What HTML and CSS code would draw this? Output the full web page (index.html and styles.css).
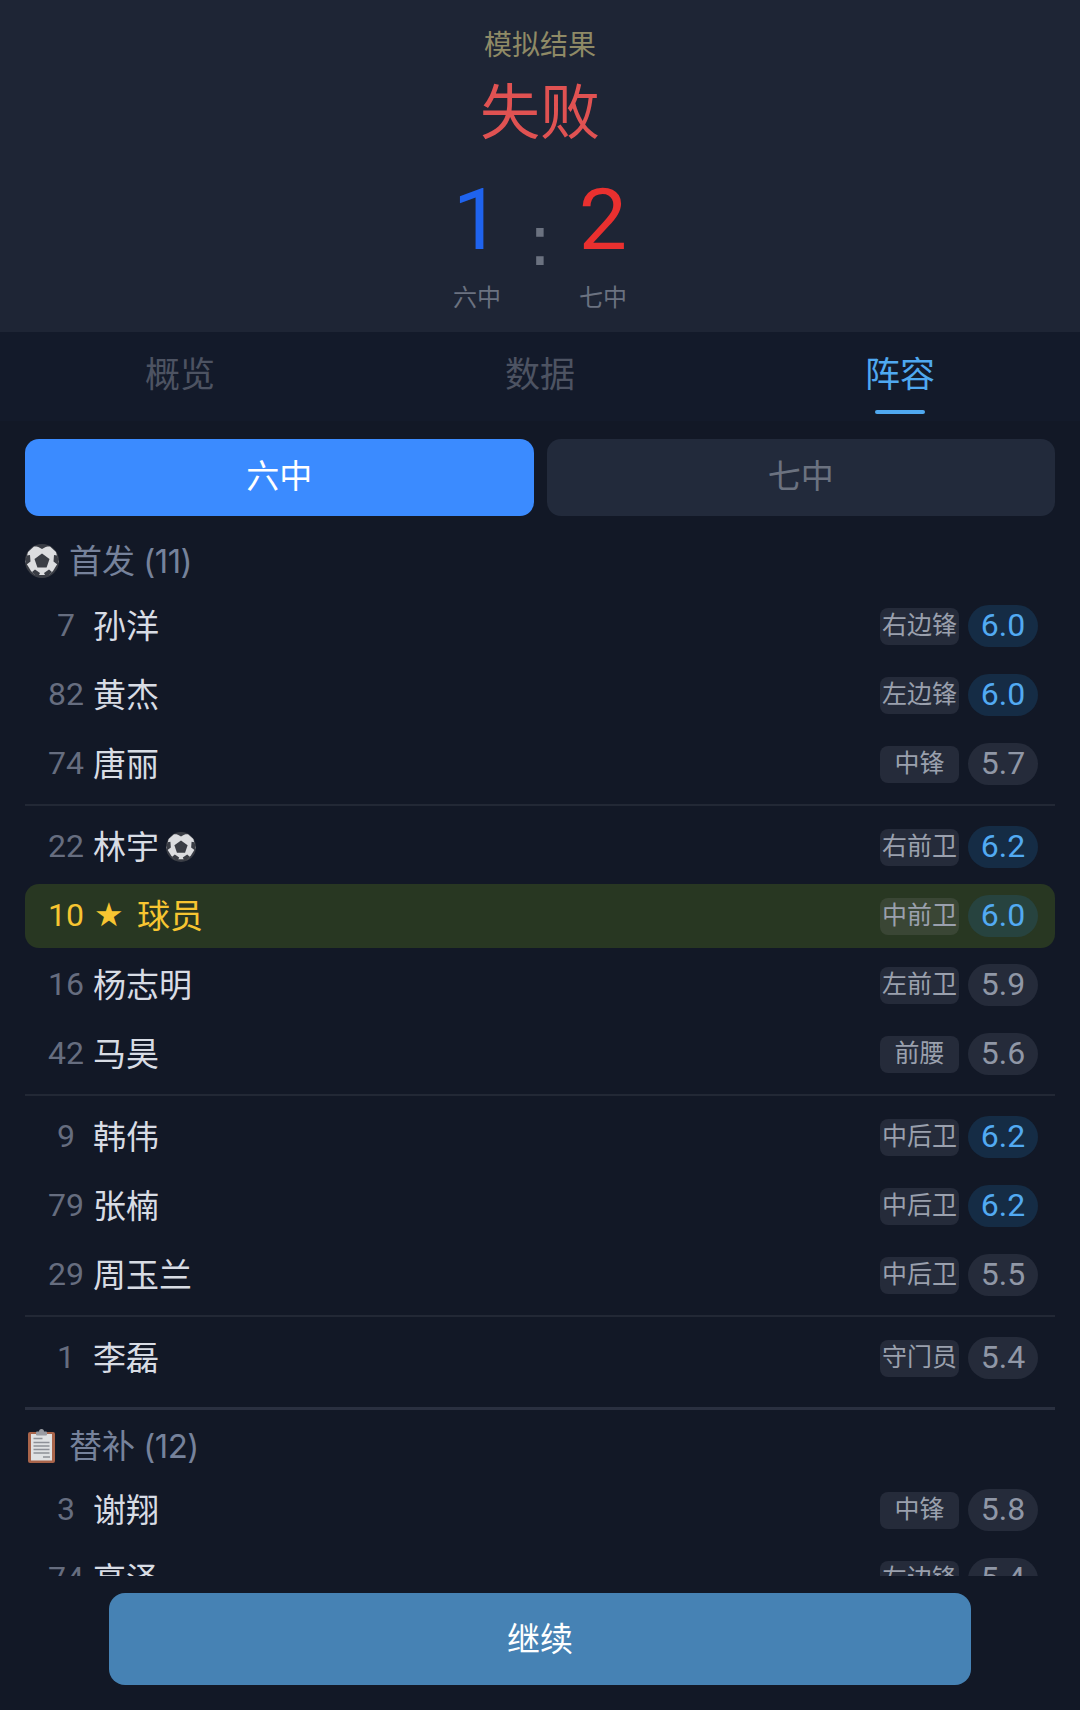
FILE: index.html
```html
<!DOCTYPE html>
<html lang="zh-CN">

<head>
    <meta charset="UTF-8">
    <meta name="viewport" content="width=device-width, initial-scale=1.0">
    <title>模拟结果</title>
    <link rel="stylesheet" href="styles.css">
</head>

<body>
    <svg class="defs" width="0" height="0" aria-hidden="true">
        <symbol id="ball" viewBox="0 0 34 34">
            <circle cx="17" cy="17" r="17" fill="#3a3d45"/>
            <path d="M9 2.500 L25 2.500 L31 8 L33.500 18 L28 27 L24 31 L10 31 L6 27 L.5 18 L3 8 Z" fill="#dcdde0"/>
            <path d="M11 1.800 Q17 -.8 23 1.800 L17 5 Z M1.800 11.500 Q0 16 1 21 L5.500 17.500 L5 11 Z M32.200 11.500 Q34 16 33 21 L28.500 17.500 L29 11 Z M7 28 Q10 32 13 33 L15 29 L10 25.500 Z M27 28 Q24 32 21 33 L19 29 L24 25.500 Z" fill="#3a3d45"/>
            <path d="M17 9.500 L24.500 15 L21.600 23.500 L12.400 23.500 L9.500 15 Z" fill="#3a3d45"/>
        </symbol>
        <symbol id="board" viewBox="0 0 30 34">
            <rect x="1" y="3" width="27" height="31" rx="2" fill="#a9644a"/>
            <rect x="4" y="5" width="21" height="26.500" fill="#dfe1e3"/>
            <rect x="9" y="2.500" width="11" height="4" rx="1" fill="#9a9ca3"/>
            <circle cx="14.500" cy="2.500" r="2.500" fill="#9a9ca3"/>
            <path d="M6.500 9.500h9M6.500 13.500h16M6.500 17h16M6.500 20.500h16M6.500 24h16M16 28h7" stroke="#8d9097" stroke-width="1.500"/>
        </symbol>
    </svg>

    <div class="page">
        <header class="hero">
            <p class="hero-label">模拟结果</p>
            <h1 class="hero-result">失败</h1>
            <div class="score">
                <div class="score-side">
                    <span class="score-num home">1</span>
                    <span class="score-team">六中</span>
                </div>
                <span class="score-sep">:</span>
                <div class="score-side">
                    <span class="score-num away">2</span>
                    <span class="score-team">七中</span>
                </div>
            </div>
        </header>

        <nav class="tabs">
            <div class="tab">概览</div>
            <div class="tab">数据</div>
            <div class="tab active">阵容</div>
        </nav>

        <main class="content">
            <div class="team-switch">
                <button class="team-btn active">六中</button>
                <button class="team-btn">七中</button>
            </div>

            <h2 class="section-title"><svg class="section-icon"><use href="#ball"/></svg><span>首发 <span class="count">(11)</span></span></h2>

            <div class="group">
                <div class="row"><span class="num">7</span><span class="name">孙洋</span><span class="pos">右边锋</span><span class="rate high">6.0</span></div>
                <div class="row"><span class="num">82</span><span class="name">黄杰</span><span class="pos">左边锋</span><span class="rate high">6.0</span></div>
                <div class="row"><span class="num">74</span><span class="name">唐丽</span><span class="pos">中锋</span><span class="rate">5.7</span></div>
            </div>
            <div class="group">
                <div class="row"><span class="num">22</span><span class="name">林宇<svg class="goal"><use href="#ball"/></svg></span><span class="pos">右前卫</span><span class="rate high">6.2</span></div>
                <div class="row me"><span class="num">10</span><span class="star">★</span><span class="name">球员</span><span class="pos">中前卫</span><span class="rate high">6.0</span></div>
                <div class="row"><span class="num">16</span><span class="name">杨志明</span><span class="pos">左前卫</span><span class="rate">5.9</span></div>
                <div class="row"><span class="num">42</span><span class="name">马昊</span><span class="pos">前腰</span><span class="rate">5.6</span></div>
            </div>
            <div class="group">
                <div class="row"><span class="num">9</span><span class="name">韩伟</span><span class="pos">中后卫</span><span class="rate high">6.2</span></div>
                <div class="row"><span class="num">79</span><span class="name">张楠</span><span class="pos">中后卫</span><span class="rate high">6.2</span></div>
                <div class="row"><span class="num">29</span><span class="name">周玉兰</span><span class="pos">中后卫</span><span class="rate">5.5</span></div>
            </div>
            <div class="group last">
                <div class="row"><span class="num">1</span><span class="name">李磊</span><span class="pos">守门员</span><span class="rate">5.4</span></div>
            </div>

            <h2 class="section-title"><svg class="section-icon"><use href="#board"/></svg><span>替补 <span class="count">(12)</span></span></h2>

            <div class="row"><span class="num">3</span><span class="name">谢翔</span><span class="pos">中锋</span><span class="rate">5.8</span></div>
            <div class="row"><span class="num">74</span><span class="name">高泽</span><span class="pos">左边锋</span><span class="rate">5.4</span></div>
        </main>

        <footer class="footer">
            <button class="continue-btn">继续</button>
        </footer>
    </div>
</body>

</html>
```

FILE: styles.css
```css
* {
    box-sizing: border-box;
}

body {
    margin: 0;
    background: #121826;
    font-family: "Roboto", "Noto Sans CJK SC", sans-serif;
}

.defs {
    position: absolute;
}

.page {
    height: 1710px;
    display: flex;
    flex-direction: column;
    overflow: hidden;
}

/* Result header */
.hero {
    height: 332px;
    background: #1e2535;
    text-align: center;
    padding-top: 26px;
    flex-shrink: 0;
}

.hero-label {
    margin: 0;
    height: 40px;
    line-height: 40px;
    font-size: 28px;
    color: #8f8a66;
}

.hero-result {
    margin: 10px 0 0;
    height: 76px;
    line-height: 76px;
    font-size: 60px;
    font-weight: 400;
    color: #e05252;
}

.score {
    display: flex;
    justify-content: center;
    margin-top: 22px;
}

.score-side {
    width: 100px;
    display: flex;
    flex-direction: column;
    align-items: center;
}

.score-num {
    height: 92px;
    line-height: 92px;
    font-size: 86px;
    font-weight: 400;
}

.score-num.home {
    color: #1f63ee;
}

.score-num.away {
    color: #e9302f;
}

.score-team {
    margin-top: 15px;
    height: 34px;
    line-height: 34px;
    font-size: 24px;
    color: #6b7280;
}

.score-sep {
    width: 26px;
    height: 92px;
    margin-top: 20px;
    line-height: 92px;
    text-align: center;
    font-family: "DejaVu Sans", sans-serif;
    font-size: 72px;
    color: #6b7280;
}

/* Tabs */
.tabs {
    height: 89px;
    display: flex;
    flex-shrink: 0;
    background: #131a2a;
}

.tab {
    flex: 1;
    position: relative;
    text-align: center;
    padding-top: 19px;
    line-height: 50px;
    font-size: 35px;
    color: #4d5362;
}

.tab.active {
    color: #4fa8f0;
}

.tab.active::after {
    content: "";
    position: absolute;
    left: 155px;
    bottom: 7px;
    width: 50px;
    height: 4px;
    border-radius: 2px;
    background: #4fa8f0;
}

/* Lineup */
.content {
    flex: 1;
    overflow: hidden;
    padding: 18px 25px 0;
}

.team-switch {
    display: flex;
    gap: 13px;
}

.team-btn {
    flex: 1;
    height: 77px;
    padding: 0 0 7px;
    border: none;
    border-radius: 14px;
    background: #222a3b;
    color: #6b7280;
    font-family: inherit;
    font-size: 33px;
}

.team-btn.active {
    background: #3b8bff;
    color: #fff;
}

.section-title {
    display: flex;
    align-items: center;
    gap: 10px;
    height: 34px;
    margin: 28px 0 16px;
    font-size: 33px;
    font-weight: 400;
    color: #76829b;
}

.section-title span {
    margin-bottom: 4px;
}

.section-title .count {
    margin: 0;
    font-family: "Inter", sans-serif;
    letter-spacing: -.5px;
}

.section-icon {
    width: 34px;
    height: 34px;
    flex-shrink: 0;
}

.group {
    border-bottom: 2px solid #222835;
    padding-bottom: 3px;
    margin-bottom: 9px;
}

.group.last {
    border-bottom: 3px solid #2a3040;
    padding-bottom: 12px;
    margin-bottom: 0;
}

.group.last + .section-title {
    margin-top: 19px;
    margin-bottom: 15px;
}

.row {
    display: flex;
    align-items: center;
    height: 64px;
    margin-bottom: 5px;
    padding: 0 17px 0 21px;
    border-radius: 14px;
}

.row.me {
    background: #283722;
}

.num {
    width: 40px;
    margin-bottom: 2px;
    text-align: center;
    font-size: 32px;
    color: #666d7f;
}

.name {
    flex: 1;
    display: flex;
    align-items: center;
    margin-left: 7px;
    margin-bottom: 4px;
    font-size: 33px;
    color: #d8dce4;
}

.goal {
    width: 30px;
    height: 30px;
    margin-left: 7px;
    margin-top: 4px;
}

.star {
    margin-left: 8px;
    margin-right: 6px;
    margin-bottom: 4px;
    width: 30px;
    font-family: "DejaVu Sans", sans-serif;
    font-size: 33px;
    color: #f7c531;
}

.me .num,
.me .name {
    color: #f7c531;
}

.pos {
    width: 79px;
    height: 37px;
    line-height: 36px;
    text-align: center;
    white-space: nowrap;
    border-radius: 8px;
    background: #252b3a;
    font-size: 25px;
    color: #9aa0ad;
}

.rate {
    width: 70px;
    height: 42px;
    margin-left: 9px;
    line-height: 40px;
    text-align: center;
    border-radius: 21px;
    background: #252b3a;
    font-size: 32px;
    color: #9097a6;
}

.rate.high {
    background: #152c45;
    color: #52aaf2;
}

.me .pos {
    background: #3a4635;
}

.me .rate {
    background: #27433f;
}

/* Bottom action */
.footer {
    height: 134px;
    flex-shrink: 0;
    padding: 17px 109px 0;
    background: #121826;
}

.continue-btn {
    width: 100%;
    height: 92px;
    padding: 0 0 4px;
    border: none;
    border-radius: 16px;
    background: #4682b4;
    color: #fff;
    font-family: inherit;
    font-size: 33px;
}
```
